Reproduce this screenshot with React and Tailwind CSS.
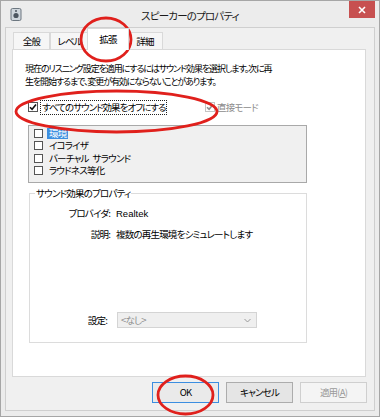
import React from "react";

function Box({ checked, disabled, size = "w-[10px] h-[10px]" }) {
  return (
    <span
      className={`${size} shrink-0 bg-white border flex items-center justify-center ${
        disabled ? "border-[#c4c4c4]" : "border-[#555]"
      }`}
    >
      {checked && (
        <svg width="8" height="8" viewBox="0 0 8 8">
          <path
            d="M1 4.2 L3.1 6.3 L7 1.6"
            fill="none"
            stroke={disabled ? "#8f8f8f" : "#111"}
            strokeWidth="1.6"
          />
        </svg>
      )}
    </span>
  );
}

function Tab({ children, active, w }) {
  if (active) {
    return (
      <div
        className={`${w} h-[22px] -mx-[2px] -mb-[1px] relative z-10 bg-white border border-b-0 border-[#d9d9d9] flex items-center justify-center pb-[1px]`}
      >
        {children}
      </div>
    );
  }
  return (
    <div
      className={`${w} h-[17px] bg-[#f6f6f6] border border-b-0 border-[#d9d9d9] flex items-center justify-center`}
    >
      {children}
    </div>
  );
}

export default function App() {
  const effects = [["環境"], ["イコライザ"], ["バーチャル", "サラウンド"], ["ラウドネス等化"]];

  return (
    <div className="relative w-[380px] h-[417px] overflow-hidden bg-[#ececec] border border-[#a6a6a6] flex flex-col text-[9.5px] leading-[13px] tracking-[-0.8px] text-black font-['Noto_Sans_CJK_JP',sans-serif] [font-feature-settings:'palt']">
      {/* title bar */}
      <div className="h-[26px] grid grid-cols-[1fr_auto_1fr] items-start">
        <div className="pl-[9px] pt-[7px]">
          <svg width="12" height="13" viewBox="0 0 12 13">
            <rect x="1" y="0.5" width="10" height="12" rx="1.5" fill="#cfd6dc" stroke="#6c7780" />
            <circle cx="6" cy="7.5" r="2.6" fill="#4c5660" />
            <circle cx="6" cy="3" r="1" fill="#4c5660" />
          </svg>
        </div>
        <div className="pt-[7px] text-[10.5px] leading-[15px] tracking-[-0.8px] text-[#1a1a1a]">
          スピーカーのプロパティ
        </div>
        <div className="flex justify-end pr-[4px]">
          <div className="w-[26px] h-[17px] bg-[#c75050] flex items-center justify-center">
            <svg width="8" height="8" viewBox="0 0 8 8">
              <path d="M1 1 L7 7 M7 1 L1 7" stroke="#fff" strokeWidth="1.6" />
            </svg>
          </div>
        </div>
      </div>

      {/* client */}
      <div className="flex-1 mx-[4px] mb-[5px] bg-[#f0f0f0] border border-[#cfcfcf] flex flex-col">
        <div className="flex items-end h-[21px] pl-[7px]">
          <Tab w="w-[37px]">全般</Tab>
          <Tab w="w-[39px]">レベル</Tab>
          <Tab w="w-[42px]" active>
            拡張
          </Tab>
          <Tab w="w-[36px]">詳細</Tab>
        </div>

        <div className="ml-[6px] w-[354px] h-[328px] bg-white border border-[#d9d9d9] flex flex-col">
          <p className="pl-[12px] pt-[12px] whitespace-nowrap text-[9px] tracking-[-1.1px]">
            現在のリスニング設定を適用にするにはサウンド効果を選択します。次に再
            <br />
            生を開始するまで、変更が有効にならないことがあります。
          </p>

          <div className="flex items-center mt-[12px] ml-[15px] h-[14px] whitespace-nowrap">
            <div className="w-[177px] flex items-center">
              <Box checked />
              <span className="ml-[2px] px-[1px] border border-dotted border-[#222] tracking-[-1px]">
                すべてのサウンド効果をオフにする
              </span>
            </div>
            <Box checked disabled />
            <span className="ml-[2px] text-[#8d8d8d]">直接モード</span>
          </div>

          <div className="ml-[15px] mt-[11px] w-[279px] h-[58px] bg-[#f0f0f0] border border-[#a9a9a9] pt-[1px]">
            {effects.map((e, i) => (
              <div key={e[0]} className="h-[12.5px] flex items-center pl-[5px]">
                <Box size="w-[9px] h-[9px]" />
                <span
                  className={`ml-[4px] px-[2px] h-[11px] leading-[11px] flex gap-[4px] whitespace-nowrap ${
                    i === 0 ? "bg-[#3d8fe0] text-white" : ""
                  }`}
                >
                  {e.map((part) => (
                    <span key={part}>{part}</span>
                  ))}
                </span>
              </div>
            ))}
          </div>

          <div className="relative ml-[16px] mt-[10px] w-[278px] h-[150px] border border-[#dcdcdc] flex flex-col pt-[13px] pb-[14px]">
            <span className="absolute -top-[7px] left-[5px] bg-white px-[1px]">
              サウンド効果のプロパティ
            </span>
            <div className="grid grid-cols-[80px_1fr] gap-x-[6px] gap-y-[8px]">
              <span className="text-right">プロバイダ:</span>
              <span className="font-['Liberation_Sans',sans-serif] tracking-normal">Realtek</span>
              <span className="text-right">説明:</span>
              <span>複数の再生環境をシミュレートします</span>
            </div>
            <div className="mt-auto grid grid-cols-[77px_1fr] gap-x-[10px] items-center">
              <span className="text-right">設定:</span>
              <div className="w-[140px] h-[16px] bg-[#efefef] border border-[#d4d4d4] flex items-center justify-between pl-[3px] pr-[5px] text-[#8d8d8d]">
                <span>&lt;なし&gt;</span>
                <svg width="7" height="5" viewBox="0 0 7 5">
                  <path d="M0.5 1 L3.5 4 L6.5 1" fill="none" stroke="#999" strokeWidth="1" />
                </svg>
              </div>
            </div>
          </div>
        </div>

        <div className="flex justify-end gap-[7px] mt-[5px] pr-[7px]">
          <button className="w-[67px] h-[21px] bg-[#eaeaea] border border-[#3c8ee0] text-black">
            OK
          </button>
          <button className="w-[67px] h-[21px] bg-[#e5e5e5] border border-[#acacac] text-black">
            キャンセル
          </button>
          <button className="w-[67px] h-[21px] bg-[#f4f4f4] border border-[#cfcfcf] text-[#9a9a9a]">
            適用(<span className="underline">A</span>)
          </button>
        </div>
      </div>

      {/* annotation circles */}
      <svg
        className="absolute inset-0 pointer-events-none"
        width="380"
        height="417"
        viewBox="0 0 380 417"
      >
        <g fill="none" stroke="#e0201c" strokeWidth="2.8">
          <ellipse cx="105" cy="38.5" rx="25" ry="21.5" />
          <ellipse cx="115.5" cy="110.5" rx="100.5" ry="20.5" />
          <ellipse cx="184.5" cy="394" rx="27.5" ry="19" />
        </g>
      </svg>
    </div>
  );
}
